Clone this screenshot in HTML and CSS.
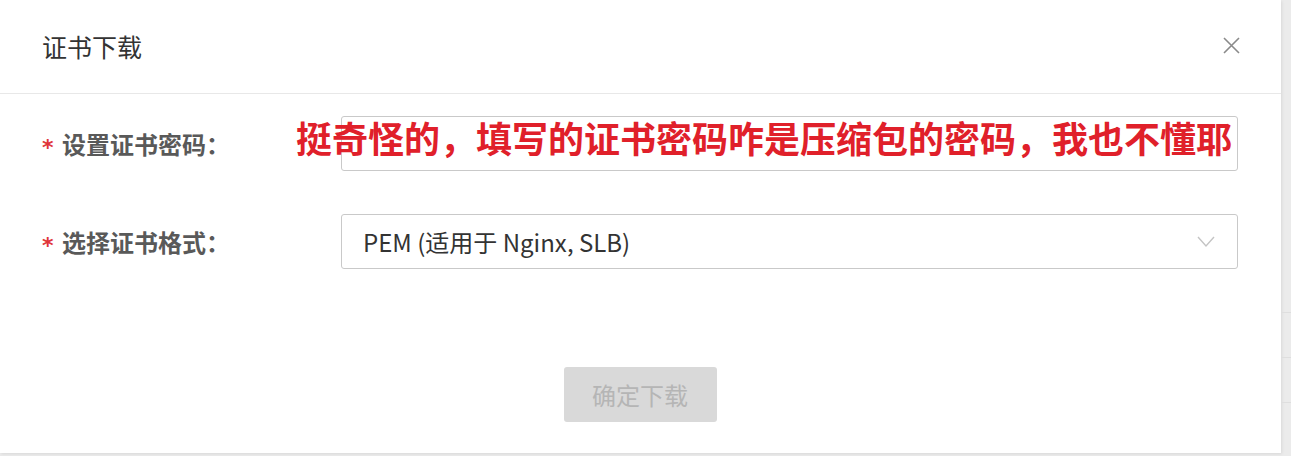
FILE: index.html
```html
<!DOCTYPE html>
<html lang="zh-CN">
<head>
    <meta charset="UTF-8">
    <meta name="viewport" content="width=device-width, initial-scale=1.0">
    <title>证书下载</title>
    <link rel="stylesheet" href="styles.css">
</head>
<body>
    <div class="page">
        <div class="modal">
            <div class="modal-header">
                <span class="modal-title">证书下载</span>
                <button class="close-btn" aria-label="关闭">
                    <svg width="17" height="17" viewBox="0 0 17 17">
                        <path d="M1 1 L16 16 M16 1 L1 16" stroke="#8a8a8a" stroke-width="1.6" fill="none"/>
                    </svg>
                </button>
            </div>
            <div class="modal-body">
                <div class="form-row">
                    <label class="form-label"><span class="required">*</span>设置证书密码：</label>
                    <input class="form-input" type="password">
                </div>
                <div class="form-row">
                    <label class="form-label"><span class="required">*</span>选择证书格式：</label>
                    <div class="form-select">
                        <span>PEM (适用于 Nginx, SLB)</span>
                        <svg width="18" height="12" viewBox="0 0 18 12">
                            <path d="M1 1 L9 10 L17 1" stroke="#c4c4c4" stroke-width="1.4" fill="none"/>
                        </svg>
                    </div>
                </div>
                <div class="modal-footer">
                    <button class="download-btn" disabled>确定下载</button>
                </div>
                <div class="note">挺奇怪的，填写的证书密码咋是压缩包的密码，我也不懂耶</div>
            </div>
        </div>
        <div class="side">
            <div class="side-row"></div>
            <div class="side-row"></div>
            <div class="side-row"></div>
        </div>
    </div>
</body>
</html>
```

FILE: styles.css
```css
body {
    margin: 0;
    background-color: #ebebeb;
    font-family: "Noto Sans CJK SC", "Noto Sans", sans-serif;
    color: #333;
}
.page {
    display: flex;
    height: 456px;
}
.modal {
    width: 1281px;
    height: 453px;
    background-color: #ffffff;
    flex-shrink: 0;
    box-shadow: 1px 1px 3px rgba(0, 0, 0, 0.08);
}
.modal-header {
    height: 94px;
    box-sizing: border-box;
    border-bottom: 1px solid #e8e8e8;
    display: flex;
    align-items: center;
    justify-content: space-between;
    padding: 0 41px 2px 42px;
}
.modal-title {
    font-size: 25px;
    color: #333;
}
.close-btn {
    border: none;
    background: none;
    padding: 0;
    display: flex;
    cursor: pointer;
}
.modal-body {
    position: relative;
    padding: 22px 43px 0 42px;
}
.form-row {
    display: flex;
    align-items: center;
    height: 55px;
    margin-bottom: 43px;
}
.form-label {
    width: 299px;
    flex-shrink: 0;
    font-size: 24px;
    font-weight: bold;
    color: #595959;
    display: flex;
    align-items: center;
}
.required {
    color: #e0353a;
    font-family: "DejaVu Sans", sans-serif;
    font-weight: bold;
    font-size: 22px;
    width: 20px;
    position: relative;
    top: 4px;
}
.form-input,
.form-select {
    flex: 1;
    height: 55px;
    box-sizing: border-box;
    border: 1px solid #c9c9c9;
    border-radius: 3px;
    background: #fff;
}
.form-select {
    display: flex;
    align-items: center;
    justify-content: space-between;
    padding: 0 22px 0 21px;
    font-size: 24px;
    color: #333;
}
.modal-footer {
    display: flex;
    justify-content: center;
    padding-top: 55px;
}
.download-btn {
    width: 153px;
    height: 55px;
    border: none;
    border-radius: 3px;
    background-color: #d9d9d9;
    color: #b5b5b5;
    font-family: inherit;
    font-size: 24px;
}
.note {
    position: absolute;
    left: 296px;
    top: 22px;
    font-size: 36px;
    font-weight: bold;
    color: #e0202a;
    white-space: nowrap;
    line-height: 1.2;
}
.side {
    flex: 1;
    padding-top: 312px;
}
.side-row {
    height: 44px;
    border-top: 1px solid #dedede;
}
.side-row:nth-child(3) {
    height: 40px;
}
```
